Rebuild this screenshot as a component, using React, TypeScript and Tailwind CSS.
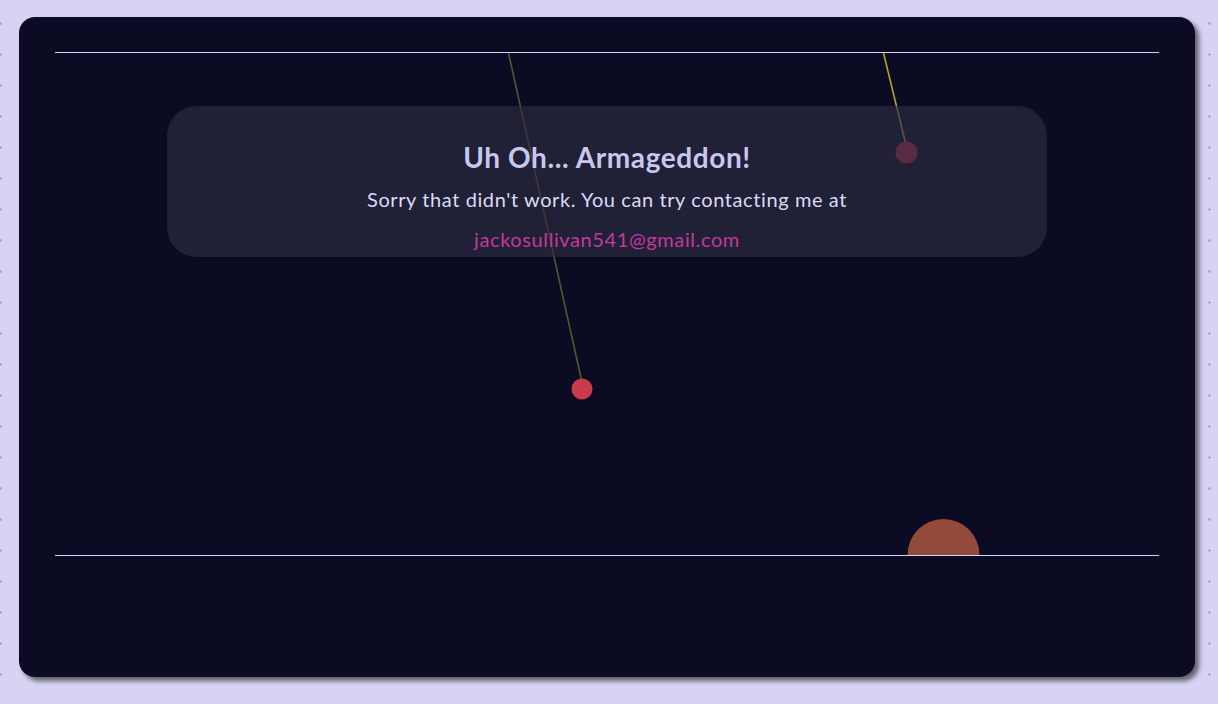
export default function App() {
  return (
    <div className="w-[1218px] h-[704px] overflow-hidden bg-[#d6d4f2] [background-image:radial-gradient(circle,#a9a7cb_1px,transparent_1.5px)] [background-size:31px_31px] [background-position:-15px_8px] pt-[17px] pl-[19px]">
      <div className="w-[1176px] h-[660px] rounded-[16px] bg-[#0b0b24] shadow-[4px_4px_5px_rgba(0,0,0,0.55)] px-[36px] pt-[35px]">
        <div className="relative h-[504px] border-y border-[#d6d4f2]">
          <svg className="absolute inset-0 w-full h-full" viewBox="0 0 1103 502" fill="none">
            <line x1="453" y1="0" x2="526" y2="327" stroke="#5a542e" strokeWidth="1.6" />
            <circle cx="526.5" cy="336" r="10.5" fill="#c93b4b" />
            <line x1="828" y1="0" x2="850" y2="90" stroke="#b4a333" strokeWidth="1.6" />
            <circle cx="851" cy="99.5" r="11" fill="#ae253f" />
            <circle cx="888" cy="502" r="36" fill="#944a3a" />
          </svg>
          <div className="relative mx-auto mt-[53px] w-[880px] h-[151px] rounded-[30px] bg-[rgba(45,45,64,0.65)] flex flex-col items-center pt-[33px] font-['Lato',sans-serif]">
            <div className="text-[28px] leading-[36px] font-bold text-[#c9c7ee] tracking-[0.6px]">Uh Oh... Armageddon!</div>
            <div className="mt-[12px] text-[20px] leading-[24px] text-[#dcdaf6] tracking-[0.6px]">Sorry that didn't work. You can try contacting me at</div>
            <div className="mt-[16px] text-[20px] leading-[24px] text-[#c23a9c] tracking-[0.6px]">jackosullivan541@gmail.com</div>
          </div>
        </div>
      </div>
    </div>
  );
}
